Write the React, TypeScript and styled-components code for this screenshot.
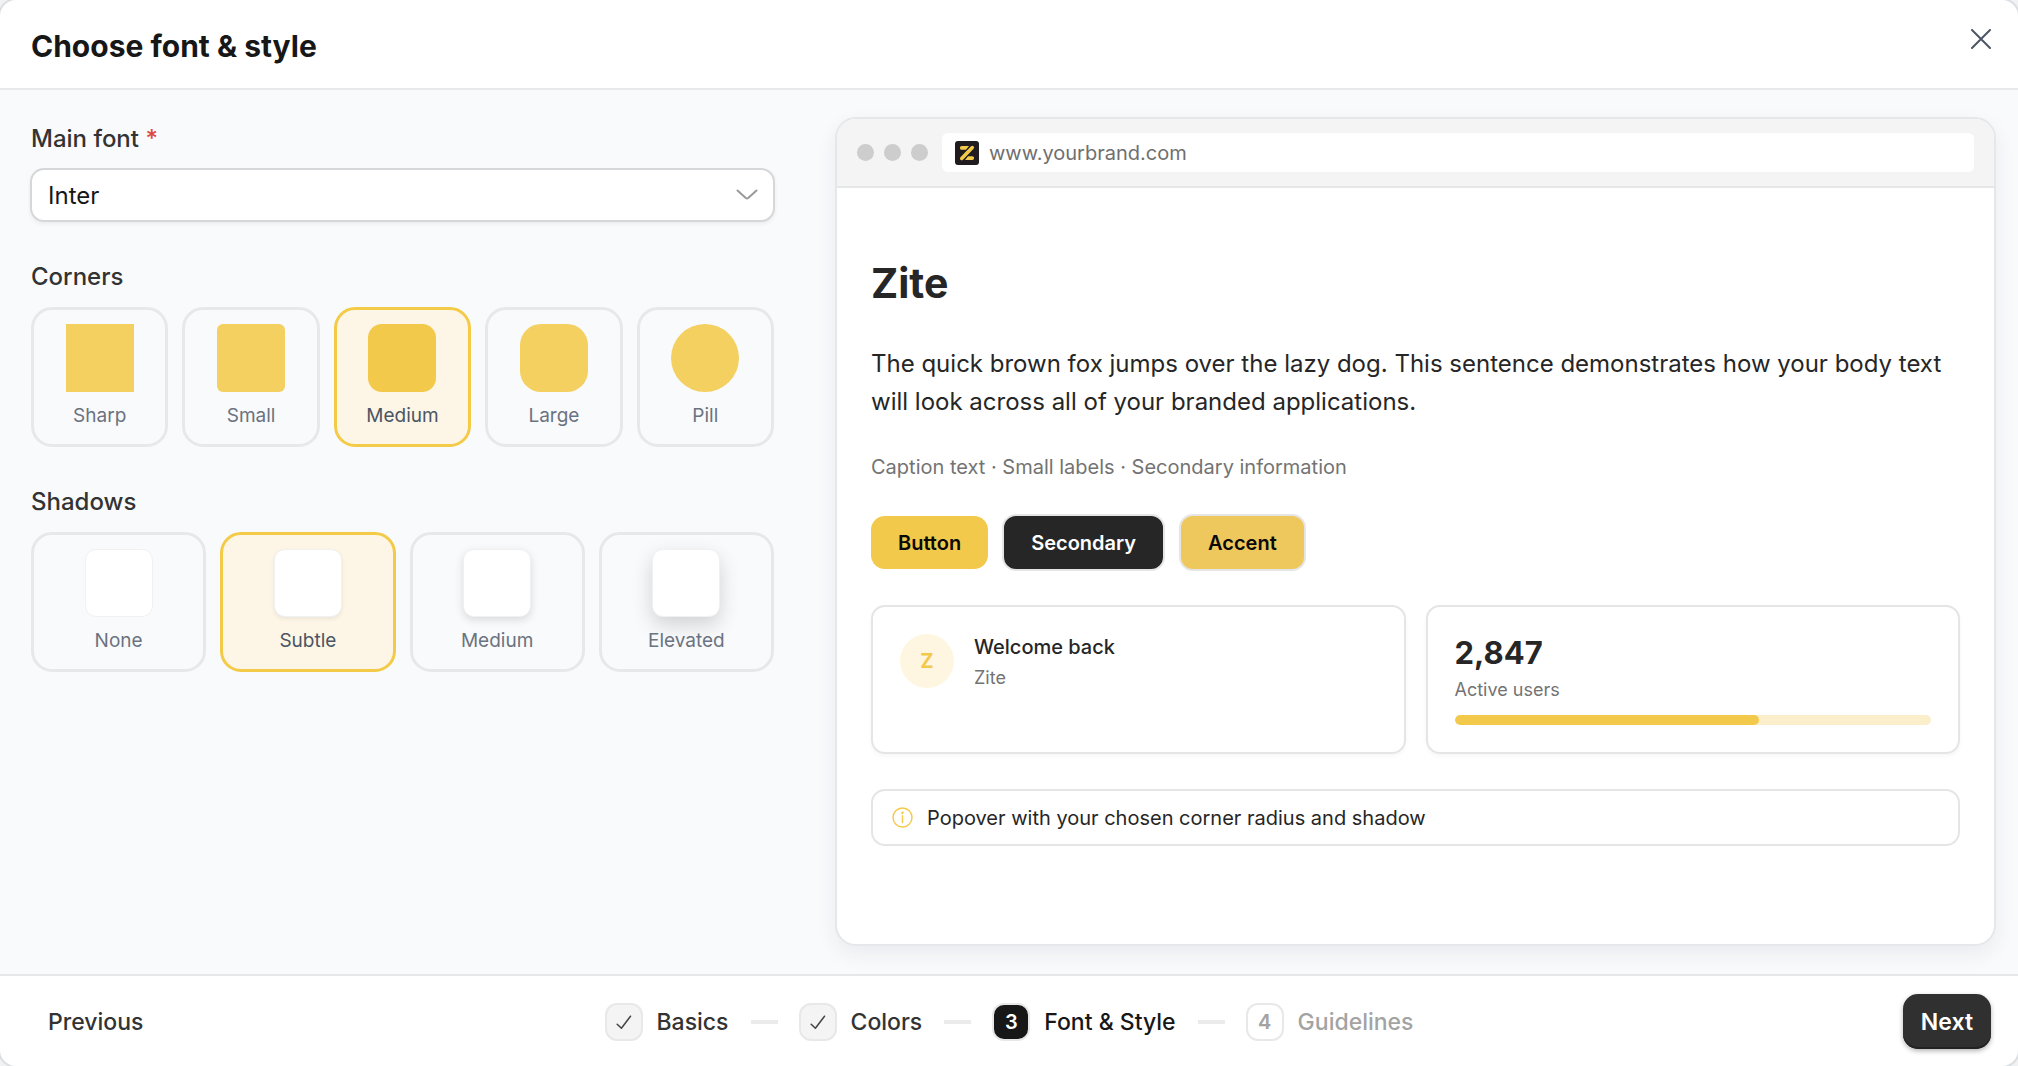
import React, { useId, useState } from "react";
import styled, { createGlobalStyle } from "styled-components";

const GlobalStyle = createGlobalStyle`
  *, *::before, *::after { box-sizing: border-box; }
  body {
    margin: 0;
    background: #f1f2f3;
    font-family: Inter, "Liberation Sans", sans-serif;
    font-size: 24px;
    color: #171717;
    -webkit-font-smoothing: antialiased;
  }
  button, select, input { font: inherit; color: inherit; }
  h1, h2, p, fieldset, ol { margin: 0; padding: 0; }
`;

const Dialog = styled.main`
  min-height: 100vh;
  display: flex;
  flex-direction: column;
  background: #fff;
  border-radius: 16px;
  box-shadow: 0 0 0 2px #dcdfe2;
  overflow: hidden;
`;

const Header = styled.header`
  display: flex;
  justify-content: space-between;
  align-items: flex-start;
  padding: 26px 24px 22px 31px;
  border-bottom: 2px solid #e8e9ea;
`;

const Title = styled.h1`
  font-size: 30px;
  line-height: 40px;
  font-weight: 700;
`;

const CloseButton = styled.button`
  display: grid;
  place-items: center;
  width: 26px;
  height: 26px;
  padding: 0;
  border: 0;
  background: none;
  color: #4b5563;
`;

const Content = styled.div`
  flex: 1;
  display: grid;
  grid-template-columns: 745fr 1161fr;
  gap: 60px;
  padding: 27px 22px 28px 30px;
  background: #f9fafc;
`;

const Form = styled.form`
  display: flex;
  flex-direction: column;
  gap: 39px;
  padding-top: 6px;
`;

const Field = styled.div`
  display: flex;
  flex-direction: column;
  gap: 13px;
`;

const Label = styled.label`
  padding: 0 1px;
  line-height: 32px;
  font-weight: 500;
  color: #333;
`;

const Required = styled.span`
  color: #dc4a41;
`;

const SelectBox = styled.div`
  display: grid;
  align-items: center;
  color: #999;

  > * { grid-area: 1 / 1; }
  > svg { justify-self: end; margin-right: 17px; pointer-events: none; }
`;

const Select = styled.select`
  appearance: none;
  width: 100%;
  height: 54px;
  padding: 0 48px 0 16px;
  border: 2px solid #d6d7d9;
  border-radius: 14px;
  background: #fff;
  box-shadow: 0 2px 4px rgba(0, 0, 0, 0.06);
  color: #171717;
`;

const Group = styled.fieldset`
  min-width: 0;
  padding: 0 1px;
  border: 0;
`;

const Legend = styled.legend`
  padding: 0;
  margin-bottom: 14px;
  line-height: 32px;
  font-weight: 500;
  color: #333;
`;

const Options = styled.div`
  display: grid;
  grid-auto-flow: column;
  grid-auto-columns: 1fr;
  gap: 14px;
`;

const Radio = styled.input`
  position: absolute;
  opacity: 0;
  pointer-events: none;
`;

const Swatch = styled.span<{ $radius: string }>`
  width: 68px;
  height: 68px;
  border-radius: ${(p) => p.$radius};
  background: #f3c94b;
  opacity: 0.88;
`;

const ShadowSwatch = styled.span<{ $shadow: string }>`
  width: 68px;
  height: 68px;
  border: 1px solid #f0f1f3;
  border-radius: 11px;
  background: #fff;
  box-shadow: ${(p) => p.$shadow};
`;

const Option = styled.label`
  display: flex;
  flex-direction: column;
  align-items: center;
  gap: 11px;
  padding: 14px 0 15px;
  border: 3px solid #e7e8ea;
  border-radius: 21px;
  font-size: 19px;
  line-height: 26px;
  color: #6b7280;

  &:has(input:checked) {
    border-color: #f3cb48;
    background: #fdf5e6;
    color: #4b5563;
  }
  &:has(input:checked) ${Swatch} { opacity: 1; }
`;

const Preview = styled.section`
  display: flex;
  flex-direction: column;
  border: 2px solid #e5e7eb;
  border-radius: 21px;
  overflow: hidden;
  background: #fff;
  box-shadow: 0 8px 20px rgba(30, 41, 59, 0.07);
`;

const BrowserBar = styled.div`
  display: flex;
  align-items: center;
  gap: 14px;
  padding: 14px 20px;
  background: #f4f4f4;
  border-bottom: 2px solid #e5e7e9;
`;

const Dots = styled.div`
  display: flex;
  gap: 10px;
`;

const Dot = styled.span`
  width: 17px;
  height: 17px;
  border-radius: 50%;
  background: #cdcdcd;
`;

const Address = styled.div`
  flex: 1;
  display: flex;
  align-items: center;
  gap: 10px;
  height: 39px;
  padding: 0 13px;
  border-radius: 6px;
  background: #fff;
  font-size: 20px;
  color: #6f6f6f;
`;

const Page = styled.div`
  display: flex;
  flex-direction: column;
  padding: 63px 34px;
  color: #262626;
`;

const Brand = styled.h2`
  margin-bottom: 30px;
  font-size: 41px;
  line-height: 64px;
  font-weight: 700;
`;

const Body = styled.p`
  margin-bottom: 30px;
  line-height: 38px;
`;

const Caption = styled.p`
  margin-bottom: 31px;
  font-size: 20px;
  line-height: 32px;
  color: #737373;
`;

const Actions = styled.div`
  display: flex;
  align-items: center;
  gap: 14px;
  margin-bottom: 34px;
`;

const ActionButton = styled.button<{ $fill: string; $ink: string; $outline?: string }>`
  height: ${(p) => (p.$outline ? "57px" : "53px")};
  padding: 0 27px;
  border: ${(p) => (p.$outline ? `2px solid ${p.$outline}` : "0")};
  border-radius: 14px;
  background: ${(p) => p.$fill};
  color: ${(p) => p.$ink};
  font-size: 20px;
  font-weight: 600;
`;

const Cards = styled.div`
  display: grid;
  grid-template-columns: 1fr 1fr;
  gap: 20px;
  margin-bottom: 35px;
`;

const Card = styled.article`
  display: flex;
  align-items: flex-start;
  gap: 20px;
  padding: 27px;
  border: 2px solid #e5e5e5;
  border-radius: 14px;
  box-shadow: 0 2px 4px rgba(0, 0, 0, 0.04);
`;

const Avatar = styled.span`
  display: grid;
  place-items: center;
  width: 54px;
  height: 54px;
  border-radius: 50%;
  background: #fef6e0;
  color: #f3c94b;
  font-size: 20px;
  font-weight: 700;
`;

const CardTitle = styled.p`
  font-size: 20px;
  line-height: 26px;
  font-weight: 500;
`;

const CardText = styled.p`
  margin-top: 5px;
  font-size: 18px;
  line-height: 26px;
  color: #737373;
`;

const Metric = styled.div`
  flex: 1;
`;

const MetricValue = styled.p`
  font-size: 31px;
  line-height: 38px;
  font-weight: 700;
`;

const Meter = styled.div`
  height: 10px;
  margin-top: 12px;
  border-radius: 5px;
  background: #faeecb;
  overflow: hidden;
`;

const MeterFill = styled.div`
  height: 100%;
  border-radius: 5px;
  background: #f3c94b;
`;

const Popover = styled.div`
  display: flex;
  align-items: center;
  gap: 14px;
  height: 57px;
  padding: 0 19px;
  border: 2px solid #e5e5e5;
  border-radius: 14px;
  font-size: 20px;
`;

const Footer = styled.footer`
  display: grid;
  grid-template-columns: 1fr auto 1fr;
  align-items: center;
  padding: 18px 27px 17px;
  border-top: 2px solid #e5e7e9;
  font-size: 23px;
`;

const PreviousButton = styled.button`
  justify-self: start;
  height: 55px;
  padding: 0 21px;
  border: 0;
  background: none;
  font-weight: 500;
  color: #333;
`;

const NextButton = styled.button`
  justify-self: end;
  height: 55px;
  padding: 0 18px;
  border: 0;
  border-radius: 15px;
  background: #303030;
  box-shadow: 0 2px 5px rgba(0, 0, 0, 0.3), inset 0 -2px 0 #222;
  font-weight: 600;
  color: #fff;
`;

const Steps = styled.ol`
  display: flex;
  align-items: center;
  gap: 21px;
  list-style: none;
`;

const Step = styled.li<{ $state: StepState }>`
  display: flex;
  align-items: center;
  gap: 14px;
  font-weight: 500;
  color: ${(p) => ({ done: "#333", current: "#171717", upcoming: "#a3a3a3" })[p.$state]};

  &:not(:last-child)::after {
    content: "";
    width: 27px;
    height: 4px;
    margin-left: 8px;
    background: #ebebeb;
  }
`;

const StepBadge = styled.span<{ $state: StepState }>`
  display: grid;
  place-items: center;
  width: 38px;
  height: 38px;
  border: 2px solid #e8e8e8;
  border-radius: 12px;
  background: ${(p) => ({ done: "#f4f4f4", current: "#171717", upcoming: "#fff" })[p.$state]};
  color: ${(p) => (p.$state === "current" ? "#fff" : "inherit")};
  font-size: 20px;
  font-weight: 600;
`;

type StepState = "done" | "current" | "upcoming";

const corners = [
  { name: "Sharp", radius: "0" },
  { name: "Small", radius: "6px" },
  { name: "Medium", radius: "14px" },
  { name: "Large", radius: "21px" },
  { name: "Pill", radius: "50%" },
];

const shadows = [
  { name: "None", shadow: "none" },
  { name: "Subtle", shadow: "0 2px 4px rgba(0, 0, 0, 0.07)" },
  { name: "Medium", shadow: "0 3px 8px rgba(0, 0, 0, 0.13)" },
  { name: "Elevated", shadow: "0 8px 20px rgba(0, 0, 0, 0.16)" },
];

const steps: { name: string; state: StepState }[] = [
  { name: "Basics", state: "done" },
  { name: "Colors", state: "done" },
  { name: "Font & Style", state: "current" },
  { name: "Guidelines", state: "upcoming" },
];

const CloseIcon = () => (
  <svg width="20" height="20" viewBox="0 0 20 20" fill="none" stroke="currentColor" strokeWidth="2" strokeLinecap="round" aria-hidden="true">
    <path d="M1 1l18 18M19 1L1 19" />
  </svg>
);

const ChevronIcon = () => (
  <svg width="22" height="12" viewBox="0 0 22 12" fill="none" stroke="currentColor" strokeWidth="2" strokeLinecap="round" strokeLinejoin="round" aria-hidden="true">
    <path d="M1.500 1.500l8.300 7.500q1.200 1 2.400 0l8.300-7.500" />
  </svg>
);

const CheckIcon = () => (
  <svg width="18" height="18" viewBox="0 0 18 18" fill="none" stroke="#444" strokeWidth="1.500" strokeLinecap="round" strokeLinejoin="round" aria-hidden="true">
    <path d="M2.200 11.200l4.200 4L15.500 3.200" />
  </svg>
);

const InfoIcon = () => (
  <svg width="21" height="21" viewBox="0 0 21 21" fill="none" stroke="#f3c94b" strokeWidth="1.400" strokeLinecap="round" aria-hidden="true">
    <circle cx="10.500" cy="10.500" r="9.500" />
    <path d="M10.500 8.800v6.700" />
    <circle cx="10.500" cy="5.800" r=".6" fill="#f3c94b" />
  </svg>
);

const SiteIcon = () => (
  <svg width="24" height="24" viewBox="0 0 24 24" aria-hidden="true">
    <rect width="24" height="24" rx="3" fill="#1f1b1e" />
    <path d="M6.800 5h7.200l-3 3.800H6.800a1.900 1.900 0 0 1 0-3.800zM17.200 19H10l3-3.800h4.200a1.900 1.900 0 0 1 0 3.800z" fill="#f3c94b" />
    <path d="M17.300 6.600L6.700 17.400" stroke="#1f1b1e" strokeWidth="5" strokeLinecap="round" />
    <path d="M17.300 6.600L6.700 17.400" stroke="#f3c94b" strokeWidth="3.600" strokeLinecap="round" />
  </svg>
);

export default function App() {
  const fontId = useId();
  const [corner, setCorner] = useState("Medium");
  const [shadow, setShadow] = useState("Subtle");

  return (
    <>
      <GlobalStyle />
      <Dialog>
        <Header>
          <Title>Choose font &amp; style</Title>
          <CloseButton type="button" aria-label="Close"><CloseIcon /></CloseButton>
        </Header>

        <Content>
          <Form>
            <Field>
              <Label htmlFor={fontId}>Main font <Required>*</Required></Label>
              <SelectBox>
                <Select id={fontId} defaultValue="Inter"><option>Inter</option></Select>
                <ChevronIcon />
              </SelectBox>
            </Field>

            <Group>
              <Legend>Corners</Legend>
              <Options>
                {corners.map(({ name, radius }) => (
                  <Option key={name}>
                    <Radio type="radio" name="corners" checked={corner === name} onChange={() => setCorner(name)} />
                    <Swatch $radius={radius} />
                    {name}
                  </Option>
                ))}
              </Options>
            </Group>

            <Group>
              <Legend>Shadows</Legend>
              <Options>
                {shadows.map((item) => (
                  <Option key={item.name}>
                    <Radio type="radio" name="shadows" checked={shadow === item.name} onChange={() => setShadow(item.name)} />
                    <ShadowSwatch $shadow={item.shadow} />
                    {item.name}
                  </Option>
                ))}
              </Options>
            </Group>
          </Form>

          <Preview>
            <BrowserBar>
              <Dots><Dot /><Dot /><Dot /></Dots>
              <Address><SiteIcon />www.yourbrand.com</Address>
            </BrowserBar>
            <Page>
              <Brand>Zite</Brand>
              <Body>
                The quick brown fox jumps over the lazy dog. This sentence demonstrates how your body text
                will look across all of your branded applications.
              </Body>
              <Caption>Caption text · Small labels · Secondary information</Caption>
              <Actions>
                <ActionButton type="button" $fill="#f3c94b" $ink="#0a0a0a">Button</ActionButton>
                <ActionButton type="button" $fill="#262626" $ink="#fff" $outline="#e5e5e5">Secondary</ActionButton>
                <ActionButton type="button" $fill="#eec85c" $ink="#0a0a0a" $outline="#e5e5e5">Accent</ActionButton>
              </Actions>
              <Cards>
                <Card>
                  <Avatar>Z</Avatar>
                  <div>
                    <CardTitle>Welcome back</CardTitle>
                    <CardText>Zite</CardText>
                  </div>
                </Card>
                <Card>
                  <Metric>
                    <MetricValue>2,847</MetricValue>
                    <CardText>Active users</CardText>
                    <Meter><MeterFill style={{ width: "64%" }} /></Meter>
                  </Metric>
                </Card>
              </Cards>
              <Popover><InfoIcon />Popover with your chosen corner radius and shadow</Popover>
            </Page>
          </Preview>
        </Content>

        <Footer>
          <PreviousButton type="button">Previous</PreviousButton>
          <Steps>
            {steps.map(({ name, state }, i) => (
              <Step key={name} $state={state}>
                <StepBadge $state={state}>{state === "done" ? <CheckIcon /> : i + 1}</StepBadge>
                {name}
              </Step>
            ))}
          </Steps>
          <NextButton type="button">Next</NextButton>
        </Footer>
      </Dialog>
    </>
  );
}
